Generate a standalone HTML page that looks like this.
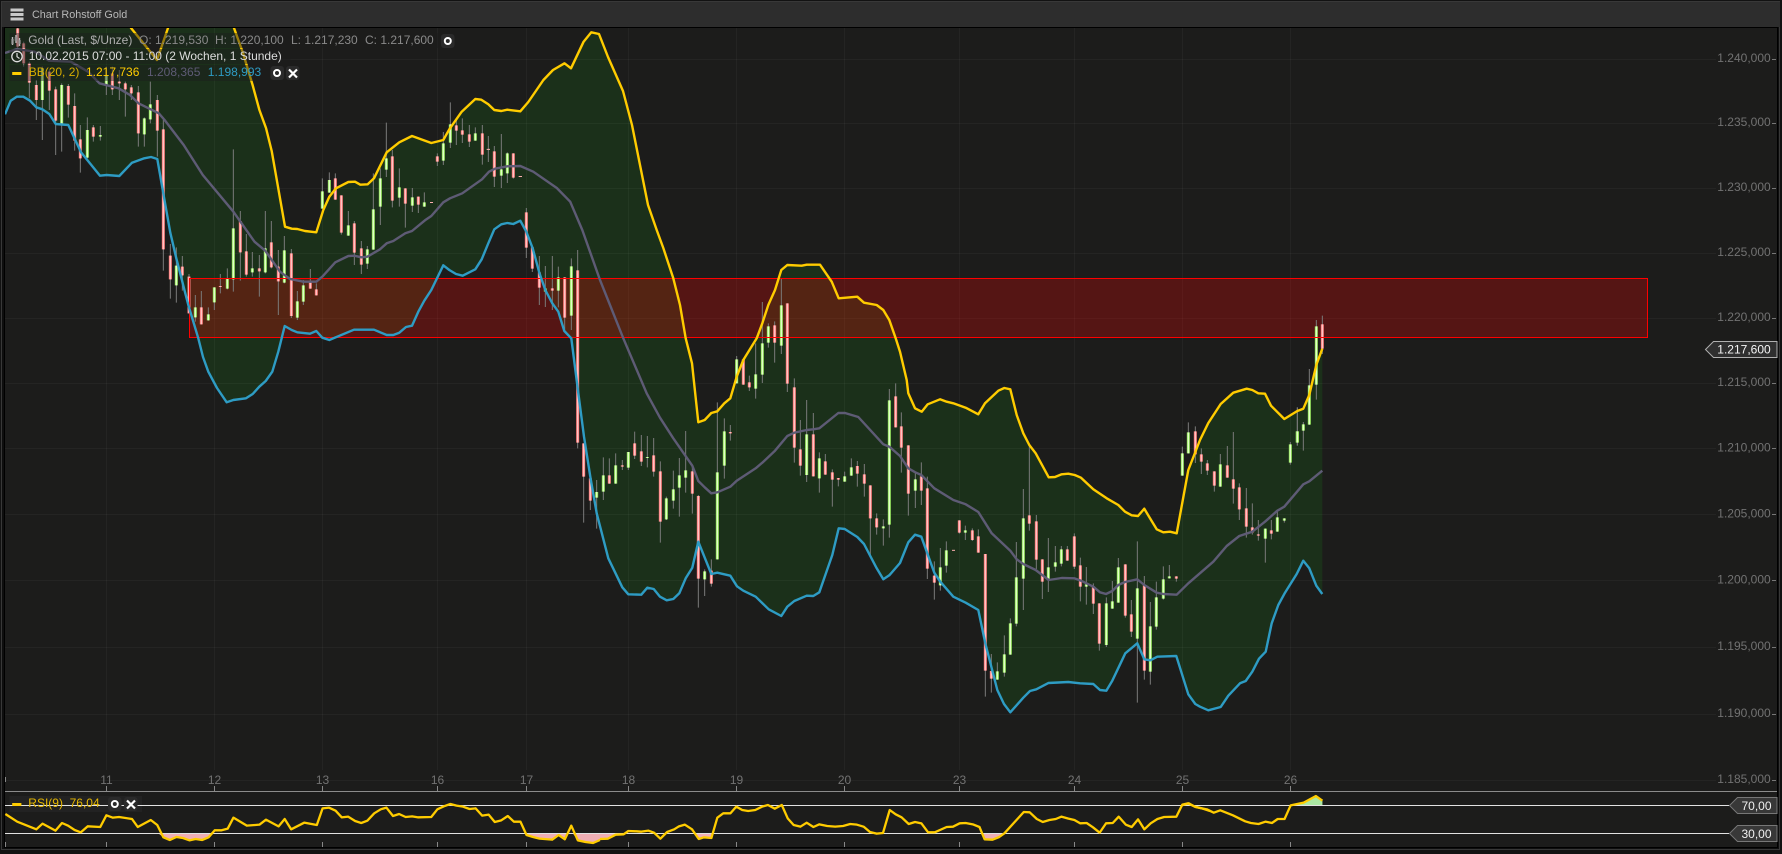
<!DOCTYPE html>
<html lang="de"><head><meta charset="utf-8"><title>Chart Rohstoff Gold</title>
<style>
html,body{margin:0;padding:0;background:#121212;width:1782px;height:854px;overflow:hidden}
svg{display:block;font-family:"Liberation Sans",Arial,sans-serif;font-size:12px}
.w{stroke:#7a7a7a;stroke-width:3;fill:none}
.ge{stroke:#9bea63;stroke-width:9;fill:none}
.gc{stroke:#e8ffd2;stroke-width:3.5;fill:none}
.re{stroke:#ff7f7f;stroke-width:9;fill:none}
.rc{stroke:#ffcaca;stroke-width:3.5;fill:none}
.ax{fill:#727272}
.bt{fill:#2a2a2a}
.ring{fill:none;stroke:#fff;stroke-width:2}
.x{stroke:#fff;stroke-width:2.2;fill:none}
.rsi{fill:none;stroke:#ffcc00;stroke-width:2.3;vector-effect:non-scaling-stroke;stroke-linejoin:round}
.tk{stroke:#888;stroke-width:1}
</style></head><body>
<svg width="1782" height="854" viewBox="0 0 1782 854" xmlns="http://www.w3.org/2000/svg">
<defs><clipPath id="cp"><rect x="5" y="28" width="1772" height="763"/></clipPath></defs>
<rect width="1782" height="854" fill="#121212"/>
<rect x="1.5" y="1.5" width="1778" height="848" fill="#0e0e0e" stroke="#383838"/>
<rect x="2" y="2" width="1778" height="25" fill="#2d2d2d"/>
<rect x="4.5" y="27.5" width="1773" height="820" fill="#1c1c1b" stroke="#000"/>
<g fill="#c9c9c9"><rect x="10.5" y="8.5" width="13" height="3"/><rect x="10.5" y="13" width="13" height="3"/><rect x="10.5" y="17.5" width="13" height="3"/></g>
<text x="32" y="18" font-size="10.8" fill="#b8b8b8">Chart Rohstoff Gold</text>

<g clip-path="url(#cp)">
<path fill="#1b301a" d="M5,-40 100,-40 131,28 157,60 168,28 190,-40 215,-40 234,28 243,53 252.6,85 259.4,110 266,128 271.7,151 285,226.7 291.7,228.7 297.3,229 305,231 316.3,232.3 323.3,210 329.3,196.7 336,188.3 348.3,182 355,181.7 360.3,184.7 367.7,184.3 374,178.3 386.7,152.3 399.3,142.3 412,136 431.3,143 443.3,140 449.3,129.3 461.7,111.7 475.3,99 481.3,99.7 488.3,104.3 494.3,110 501.3,111 507.3,109.7 520.3,111.3 528.3,102 543.4,80 553,70 564.5,63.3 571,68.3 583.6,41.7 591.3,32.3 599,34 608,57 623,91 632,125 640,165 648,205 656.7,230 663.3,248 673.3,278.3 680,305 685.7,338.3 692,363.3 698.3,422.3 704.7,420 711.3,413 717.3,411.3 724.3,403.3 730.3,398.3 736.7,376.7 743.3,360 756.7,338.3 762.3,323.3 768.3,305 775,290 781.3,270 787.3,265 801.7,265.7 806.7,264.7 820,264.7 831.7,281.7 838.7,298.3 857.3,296.7 864,302.7 876.7,305 883.3,310 889.3,320 895.7,338.3 900,351.7 906.7,380 908.3,393.3 915,408.3 921.7,411.7 927.7,404.3 940,399.3 946.7,401.7 953.3,403.3 965.7,407.7 978.3,414.3 985,403.3 998.3,390.7 1004.3,388 1010.3,389.3 1016.7,415 1023.3,433.3 1029.3,445 1035.7,453.3 1048.7,477.3 1055,477 1061.7,474.3 1068.3,473.7 1074.7,475 1081,477.7 1093.3,489.3 1106.7,498.3 1118.3,505 1125,511.7 1131.7,515.3 1138,516 1144.3,508.7 1150,518.3 1156.7,529.3 1163.3,532.3 1170,531.7 1176.7,533.3 1188.3,470 1200,440 1208.3,423 1220.7,404 1233.3,392.7 1246.7,388.7 1252.3,390 1258.3,393.3 1265,393.7 1271,405.7 1284.3,419 1297.3,411 1303.3,408.7 1309.3,395 1316.3,365 1322.3,348.7 1322.3,594 1316.3,585.7 1309.3,568.3 1303.3,560.7 1296.7,574 1285,592.7 1278.3,605 1271.7,623.3 1265.7,651.7 1259,658.7 1252.3,671.7 1245.7,681 1240,683.3 1228.3,695.7 1220.7,707 1208.3,710.3 1200,706.7 1195.3,704 1188.3,694.3 1176.3,656 1157.3,656.7 1150.3,660.3 1144.3,659.3 1137.3,643.3 1125.3,653.3 1112.3,680.7 1106.3,690.7 1100,690 1093.3,684 1080,683.3 1068.3,682 1048.3,683 1036.3,689.3 1030,691 1023.3,697.7 1010.3,712.3 1004,704 997.3,690 985.3,643.3 978.3,610 965.7,602.7 953.3,596.7 940.3,581.7 934.3,572.7 921.3,536.7 915,534.7 908.3,542.3 900,563 889.3,575.3 883.3,579.3 876.7,568.3 864,544 857.3,537 844.7,529 838.7,528.3 832.3,555 819.3,592.3 813.3,596 806.7,595.7 794.3,601 787.3,606.7 781.3,616 768.7,609.3 755.7,596.7 743.3,590.7 737,586.3 730.3,575.7 717.3,572.7 711.3,574 698.3,541.7 692.3,567.7 685.7,578.3 679.3,593.3 673.3,599 666.7,600.3 660,596.7 653.7,589 647.3,587.7 641.3,594.7 628.3,594.3 622.3,587.3 608.3,558.3 596.7,513.3 590.3,476.7 584,436.7 577.7,388.3 571.3,338.3 564.3,331 558.3,311.7 552.3,303.3 545.3,290 539.3,272.7 532.7,248.3 526.3,231.7 520.3,220.7 513.3,224 507.3,223 501.3,224.3 494.3,229.3 488.3,243.3 481.7,259.3 475.3,269.3 462.7,275.7 456,274 449.3,270 443.3,265.3 431.3,290 424.3,300.7 418.3,311.7 412,325.7 406,327 399.3,332.7 393.3,335 386.7,335 374,329.7 354,329.7 329.3,340 322.3,337.7 316.3,331 310,333.7 297.3,332.3 291.7,330 284.7,326 278.3,351.7 272.3,371.7 265.7,381 259.3,386.7 252.7,394 246,398.3 233.3,400 226.7,402.3 217,388 208.3,371.7 203,357 198.3,338.3 188.3,305 176.3,258.3 170.3,232.7 163.3,193.3 157.3,159 151,157 144.3,158.3 132,162.7 119.3,176 106.7,175 100,175.7 81,152.3 68.3,125 55.7,124 49.3,114 42.3,109.3 36.3,107.3 30,100.7 23.3,96.7 16.7,96.7 10.7,100.7 5,114.3Z"/>
<g stroke="#fff" stroke-opacity=".04" stroke-width="1" fill="none">
<path d="M5,59.5H1716M5,123.5H1716M5,188.5H1716M5,253.5H1716M5,318.5H1716M5,383.5H1716M5,448.5H1716M5,514.5H1716M5,580.5H1716M5,647.5H1716M5,714.5H1716M5,780.5H1716"/>
<path d="M106.5,28V770M214.5,28V770M322.5,28V770M437.5,28V770M526.5,28V770M628.5,28V770M736.5,28V770M844.5,28V770M959.5,28V770M1074.5,28V770M1182.5,28V770M1290.5,28V770"/>
</g>
<rect x="189.5" y="278.5" width="1458" height="59" fill="#ff0000" fill-opacity=".25"/>

<!-- candles -->
<g transform="translate(0,80) scale(.33333)">
<path class="w" d="M53,-160V-90M71,-115V-40M88,-55V55M109,0V120M127,-40V180M148,-30V90M167,20V225M185,10V215M205,12V113M224,40V212M241,135V278M262,112V235M280,135V185M301,138V182M319,-40V45M337,-40V45M358,-30V60M376,5V110M394,15V60M415,18V200M433,112V200M451,5V130M472,45V230M490,120V572M511,492V656M529,502V668M547,528V632M567,582V700M586,645V725M604,633V733M625,682V722M643,622V690M661,582V640M682,565V628M700,208V635M721,393V602M739,462V590M757,516V590M778,525V650M796,393V580M814,423V565M835,510V705"/>
<path class="ge" d="M127,-35V60M185,15V135M262,150V233M301,165V170M319,-15V18M433,115V163M451,73V118M529,557V616M586,682V712M625,703V721M643,622V667M682,597V626M700,445V598M757,565V577M796,505V577"/>
<path class="gc" d="M127,-35V60M185,15V135M262,150V233M301,165V170M319,-15V18M433,115V163M451,73V118M529,557V616M586,682V712M625,703V721M643,622V667M682,597V626M700,445V598M757,565V577M796,505V577"/>
<path class="re" d="M53,-155V-100M71,-110V-50M88,-50V8M109,15V60M148,-25V32M167,28V122M205,18V74M224,78V182M241,178V235M280,142V170M337,-20V28M358,5V10M376,10V28M394,22V40M415,37V160M472,60V152M490,148V508M511,527V598M547,560V586M567,590V700M604,682V733M661,618V621M721,423V517M739,514V584M778,565V574M814,487V562M835,560V604"/>
<path class="rc" d="M53,-155V-100M71,-110V-50M88,-50V8M109,15V60M148,-25V32M167,28V122M205,18V74M224,78V182M241,178V235M280,142V170M337,-20V28M358,5V10M376,10V28M394,22V40M415,37V160M472,60V152M490,148V508M511,527V598M547,560V586M567,590V700M604,682V733M661,618V621M721,423V517M739,514V584M778,565V574M814,487V562M835,560V604"/>
</g>
<g transform="translate(280,90) scale(.33333)">
<path class="w" d="M13,438V580M34,477V684M52,603V690M70,570V645M91,537V596M109,580V616M127,265V356M148,247V308M166,250V329M184,316V434M205,363V437M223,393V525M244,453V552M262,468V537M280,250V479M301,235V405M319,98V261M337,180V352M358,235V350M376,295V413M397,294V366M415,320V369M433,307V350M472,190V228M490,126V225M511,37V174M529,85V165M547,85V159M568,105V171M586,112V152M607,105V224M625,138V216M643,168V291M664,132V294M682,187V279M700,190V266M739,354V504M757,468V546M778,498V645M796,528V651M817,498V660M835,530V652"/>
<path class="ge" d="M13,481V578M52,634V683M70,586V635M127,304V356M148,270V308M205,406V437M262,478V521M280,358V479M301,265V350M319,205V239M358,292V323M397,322V347M433,337V350M490,160V212M511,103V158M586,130V152M664,238V257M682,190V250M796,595V605M835,562V602"/>
<path class="gc" d="M13,481V578M52,634V683M70,586V635M127,304V356M148,270V308M205,406V437M262,478V521M280,358V479M301,265V350M319,205V239M358,292V323M397,322V347M433,337V350M490,160V212M511,103V158M586,130V152M664,238V257M682,190V250M796,595V605M835,562V602"/>
<path class="re" d="M34,490V678M91,575V596M109,598V616M166,265V329M184,316V428M223,400V488M244,475V524M337,199V332M376,295V341M415,320V344M472,199V215M529,106V122M547,121V134M568,133V155M607,130V194M643,184V260M700,190V263M739,367V473M757,472V536M778,547V593M817,595V602"/>
<path class="rc" d="M34,490V678M91,575V596M109,598V616M166,265V329M184,316V428M223,400V488M244,475V524M337,199V332M376,295V341M415,320V344M472,199V215M529,106V122M547,121V134M568,133V155M607,130V194M643,184V260M700,190V263M739,367V473M757,472V536M778,547V593M817,595V602"/>
<path d="M450,337.5H459M620,178H630M716,259.5H726" stroke="#ffb0b0" stroke-width="3" fill="none"/>
</g>
<g transform="translate(500,230) scale(.33333)">
<path class="w" d="M194,142V299M214,85V300M233,60V655M251,640V878M271,745V840M290,750V896M310,682V810M328,685V761M347,670V761M367,690V720M385,666V720M404,605V687M424,615V708M442,618V712M461,624V740M481,694V938M499,800V870M520,722V836M538,684V860M557,603V788M577,710V851M595,795V1133M614,1018V1098M634,988V1070M652,517V988M673,565V746M691,585V632M710,378V460M730,385V464M748,437V483M767,340V506M787,216V459M805,280V353M824,274V398M844,145V372M862,220V486M883,445V698M901,570V737M920,510V756M940,549V739M958,667V788M976,672V734M997,718V830M1015,744V769M1034,725V755M1054,685V737M1072,693V770M1093,702V800M1111,766V980M1130,850V914M1150,868V947M1168,477V923M1187,460V592"/>
<path class="ge" d="M214,109V257M290,786V803M310,736V785M347,706V761M385,666V713M442,681V684M499,805V868M520,778V812M538,736V773M557,721V743M614,1024V1048M652,727V988M673,604V707M710,388V460M767,433V476M787,340V434M805,289V338M844,226V347M920,613V735M958,685V745M1034,739V755M1054,712V737M1150,889V895M1168,511V884"/>
<path class="gc" d="M214,109V257M290,786V803M310,736V785M347,706V761M385,666V713M442,681V684M499,805V868M520,778V812M538,736V773M557,721V743M614,1024V1048M652,727V988M673,604V707M710,388V460M767,433V476M787,340V434M805,289V338M844,226V347M920,613V735M958,685V745M1034,739V755M1054,712V737M1150,889V895M1168,511V884"/>
<path class="re" d="M194,142V263M233,121V638M251,640V740M271,745V812M328,736V761M367,706V710M404,640V677M424,664V695M461,676V725M481,724V875M577,724V791M595,798V1046M634,1022V1061M691,606V610M730,388V464M748,457V472M824,286V338M862,220V461M883,472V653M901,658V707M940,613V739M976,694V734M997,727V749M1015,744V749M1072,708V731M1093,733V761M1111,766V865M1130,865V892M1187,499V592"/>
<path class="rc" d="M194,142V263M233,121V638M251,640V740M271,745V812M328,736V761M367,706V710M404,640V677M424,664V695M461,676V725M481,724V875M577,724V791M595,798V1046M634,1022V1061M691,606V610M730,388V464M748,457V472M824,286V338M862,220V461M883,472V653M901,658V707M940,613V739M976,694V734M997,727V749M1015,744V749M1072,708V731M1093,733V761M1111,766V865M1130,865V892M1187,499V592"/>
</g>
<g transform="translate(900,380) scale(.33333)">
<path class="w" d="M4,97V278M25,196V407M46,280V384M64,247V375M82,290V597M103,544V659M121,504V632M139,484V578M178,421V461M196,437V480M217,445V483M235,448V518M256,522V950M274,822V938M292,847V899M313,766V890M331,715V824M349,486V739M370,327V690M388,197V452M409,405V567M427,538V657M445,474V636M466,498V575M484,498V559M502,498V542M523,460V567M541,533V664M559,561V674M580,610V702M598,670V812M619,652V801M637,603V686M655,534V668M676,553V713M694,660V771M712,484V968M733,588V899M751,666V914M769,605V749M790,559V659M808,555V595M829,589V605M847,200V287M865,127V220M886,139V249M904,205V282M922,240V285M943,274V335M961,222V320M982,198V293M1000,156V371M1018,310V420M1039,324V473M1057,370V464M1075,420V482M1096,446V548M1114,420V478M1132,393V455M1153,415V428M1171,186V254M1192,82V197"/>
<path class="ge" d="M46,298V332M121,562V616M139,511V557M196,451V458M292,874V899M313,823V878M331,730V824M349,592V731M370,415V596M445,562V598M466,547V560M484,508V551M559,613V620M619,670V795M637,664V686M655,562V668M712,625V776M751,739V875M769,652V740M790,598V656M808,589V595M847,220V287M865,157V220M961,253V320M1096,446V476M1132,412V455M1153,415V422M1171,193V248M1192,154V187"/>
<path class="gc" d="M46,298V332M121,562V616M139,511V557M196,451V458M292,874V899M313,823V878M331,730V824M349,592V731M370,415V596M445,562V598M466,547V560M484,508V551M559,613V620M619,670V795M637,664V686M655,562V668M712,625V776M751,739V875M769,652V740M790,598V656M808,589V595M847,220V287M865,157V220M961,253V320M1096,446V476M1132,412V455M1153,415V422M1171,193V248M1192,154V187"/>
<path class="re" d="M4,139V203M25,196V341M64,289V332M82,325V566M103,587V608M178,421V458M217,451V480M235,469V518M256,522V872M274,873V896M388,406V431M409,424V539M427,538V605M502,508V542M523,469V560M541,556V620M580,619V671M598,670V791M676,553V707M694,703V755M733,614V872M829,589V596M886,154V223M904,223V245M922,250V272M943,274V317M982,256V293M1000,298V326M1018,322V388M1039,385V440M1057,442V458M1075,463V467M1114,451V461"/>
<path class="rc" d="M4,139V203M25,196V341M64,289V332M82,325V566M103,587V608M178,421V458M217,451V480M235,469V518M256,522V872M274,873V896M388,406V431M409,424V539M427,538V605M502,508V542M523,469V560M541,556V620M580,619V671M598,670V791M676,553V707M694,703V755M733,614V872M829,589V596M886,154V223M904,223V245M922,250V272M943,274V317M982,256V293M1000,298V326M1018,322V388M1039,385V440M1057,442V458M1075,463V467M1114,451V461"/>
<path d="M156,511H165" stroke="#ffb0b0" stroke-width="3" fill="none"/>
</g>
<g transform="translate(1200,300) scale(.33333)">
<path class="w" d="M292,322V437M310,366V452M328,207V374M349,60V299M367,47V162"/>
<path class="ge" d="M292,394V428M310,373V392M328,256V374M349,79V254"/>
<path class="gc" d="M292,394V428M310,373V392M328,256V374M349,79V254"/>
<path class="re" d="M367,73V146"/>
<path class="rc" d="M367,73V146"/>
</g>

<rect x="189.5" y="278.5" width="1458" height="59" fill="none" stroke="#f00" stroke-width="1"/>

<!-- Bollinger lines -->
<polyline fill="none" stroke="#5e5b75" stroke-width="2.4" stroke-linejoin="round" points="5,53 17,49 34.4,51.7 42,56 49,60.7 70.8,61.7 88,71.7 99.5,83.3 118.6,88.3 130,95 138.5,103.3 158.8,113.3 164.6,120 183.7,145 202.8,175 233.4,211.7 254.5,241.7 265.2,250.7 280,271.7 290,279 303.3,281.7 316.3,281.7 322.3,276.7 335.3,262.3 348.3,256 354.3,255.7 361.3,257.3 367.3,256.7 380,249.3 386.7,243.3 393.3,241 405.3,233.3 412,231 425,220.3 431.3,216 443.3,202.3 450,198.3 462.3,193.3 482,179.3 489,171.7 495,168.7 507.3,166.3 520.3,166 533.3,171.7 556.8,188 570.2,201.7 582.3,230 600,280 623.3,338.3 646.7,393.3 660,417.7 673.3,438.3 692.3,465.7 698.3,481 704.7,487.3 711.3,493.3 717.3,492.3 730.3,486.7 736.7,480.7 755.7,468.3 762.3,462.7 775,450.7 787.3,436 794.3,432.7 806.7,430 813.3,429.3 819.3,428.3 838.3,413 845,413 858.3,417 883.3,444.3 889.3,446.7 900,456 908.3,468.3 915.3,472.3 921.3,475 934.3,488.3 953.3,500 965.7,504.3 978.3,512 991.7,533.3 1010.3,550.7 1016.7,559.3 1023.3,564 1035.7,570 1048.7,580 1061.7,578 1074.3,578.3 1081,580.7 1093.3,586.7 1100,592.3 1106,594 1112.3,591 1118.3,585 1125,582 1137.3,579.3 1144.3,585 1156.7,592.7 1163.3,594 1176.7,594.7 1188.3,583.3 1213.3,561.7 1226.7,546 1239.3,536 1252.3,531.7 1265,521.7 1277.3,510.7 1284.3,506.7 1303.3,484.3 1309.3,481.3 1322.3,470.7"/>
<polyline fill="none" stroke="#ffcc00" stroke-width="2.4" stroke-linejoin="round" points="100,-40 131,28 157,60 168,28 190,-40 215,-40 234,28 243,53 252.6,85 259.4,110 266,128 271.7,151 285,226.7 291.7,228.7 297.3,229 305,231 316.3,232.3 323.3,210 329.3,196.7 336,188.3 348.3,182 355,181.7 360.3,184.7 367.7,184.3 374,178.3 386.7,152.3 399.3,142.3 412,136 431.3,143 443.3,140 449.3,129.3 461.7,111.7 475.3,99 481.3,99.7 488.3,104.3 494.3,110 501.3,111 507.3,109.7 520.3,111.3 528.3,102 543.4,80 553,70 564.5,63.3 571,68.3 583.6,41.7 591.3,32.3 599,34 608,57 623,91 632,125 640,165 648,205 656.7,230 663.3,248 673.3,278.3 680,305 685.7,338.3 692,363.3 698.3,422.3 704.7,420 711.3,413 717.3,411.3 724.3,403.3 730.3,398.3 736.7,376.7 743.3,360 756.7,338.3 762.3,323.3 768.3,305 775,290 781.3,270 787.3,265 801.7,265.7 806.7,264.7 820,264.7 831.7,281.7 838.7,298.3 857.3,296.7 864,302.7 876.7,305 883.3,310 889.3,320 895.7,338.3 900,351.7 906.7,380 908.3,393.3 915,408.3 921.7,411.7 927.7,404.3 940,399.3 946.7,401.7 953.3,403.3 965.7,407.7 978.3,414.3 985,403.3 998.3,390.7 1004.3,388 1010.3,389.3 1016.7,415 1023.3,433.3 1029.3,445 1035.7,453.3 1048.7,477.3 1055,477 1061.7,474.3 1068.3,473.7 1074.7,475 1081,477.7 1093.3,489.3 1106.7,498.3 1118.3,505 1125,511.7 1131.7,515.3 1138,516 1144.3,508.7 1150,518.3 1156.7,529.3 1163.3,532.3 1170,531.7 1176.7,533.3 1188.3,470 1200,440 1208.3,423 1220.7,404 1233.3,392.7 1246.7,388.7 1252.3,390 1258.3,393.3 1265,393.7 1271,405.7 1284.3,419 1297.3,411 1303.3,408.7 1309.3,395 1316.3,365 1322.3,348.7"/>
<polyline fill="none" stroke="#2e9cc4" stroke-width="2.4" stroke-linejoin="round" points="5,114.3 10.7,100.7 16.7,96.7 23.3,96.7 30,100.7 36.3,107.3 42.3,109.3 49.3,114 55.7,124 68.3,125 81,152.3 100,175.7 106.7,175 119.3,176 132,162.7 144.3,158.3 151,157 157.3,159 163.3,193.3 170.3,232.7 176.3,258.3 188.3,305 198.3,338.3 203,357 208.3,371.7 217,388 226.7,402.3 233.3,400 246,398.3 252.7,394 259.3,386.7 265.7,381 272.3,371.7 278.3,351.7 284.7,326 291.7,330 297.3,332.3 310,333.7 316.3,331 322.3,337.7 329.3,340 354,329.7 374,329.7 386.7,335 393.3,335 399.3,332.7 406,327 412,325.7 418.3,311.7 424.3,300.7 431.3,290 443.3,265.3 449.3,270 456,274 462.7,275.7 475.3,269.3 481.7,259.3 488.3,243.3 494.3,229.3 501.3,224.3 507.3,223 513.3,224 520.3,220.7 526.3,231.7 532.7,248.3 539.3,272.7 545.3,290 552.3,303.3 558.3,311.7 564.3,331 571.3,338.3 577.7,388.3 584,436.7 590.3,476.7 596.7,513.3 608.3,558.3 622.3,587.3 628.3,594.3 641.3,594.7 647.3,587.7 653.7,589 660,596.7 666.7,600.3 673.3,599 679.3,593.3 685.7,578.3 692.3,567.7 698.3,541.7 711.3,574 717.3,572.7 730.3,575.7 737,586.3 743.3,590.7 755.7,596.7 768.7,609.3 781.3,616 787.3,606.7 794.3,601 806.7,595.7 813.3,596 819.3,592.3 832.3,555 838.7,528.3 844.7,529 857.3,537 864,544 876.7,568.3 883.3,579.3 889.3,575.3 900,563 908.3,542.3 915,534.7 921.3,536.7 934.3,572.7 940.3,581.7 953.3,596.7 965.7,602.7 978.3,610 985.3,643.3 997.3,690 1004,704 1010.3,712.3 1023.3,697.7 1030,691 1036.3,689.3 1048.3,683 1068.3,682 1080,683.3 1093.3,684 1100,690 1106.3,690.7 1112.3,680.7 1125.3,653.3 1137.3,643.3 1144.3,659.3 1150.3,660.3 1157.3,656.7 1176.3,656 1188.3,694.3 1195.3,704 1200,706.7 1208.3,710.3 1220.7,707 1228.3,695.7 1240,683.3 1245.7,681 1252.3,671.7 1259,658.7 1265.7,651.7 1271.7,623.3 1278.3,605 1285,592.7 1296.7,574 1303.3,560.7 1309.3,568.3 1316.3,585.7 1322.3,594"/>
</g>

<!-- legend -->
<rect x="9.5" y="33" width="445.5" height="15" fill="#1c1c1c" fill-opacity=".45"/>
<rect x="9.5" y="49" width="281" height="15" fill="#1c1c1c" fill-opacity=".45"/>
<rect x="9.5" y="65" width="294" height="16" fill="#1c1c1c" fill-opacity=".45"/>
<path d="M12.5,37V45M16,35V43M19.5,38V46" stroke="#bbb" stroke-width="1.4" fill="none"/>
<path d="M11,39H14V44H11ZM14.5,37H17.5V41H14.5ZM18,40H21V44H18Z" fill="#888" fill-opacity=".6"/>
<text x="28.3" y="44" fill="#aeaeae">Gold (Last, $/Unze)</text>
<text x="139" y="44" fill="#8a8a8a">O: 1.219,530</text>
<text x="215" y="44" fill="#8a8a8a">H: 1.220,100</text>
<text x="291" y="44" fill="#8a8a8a">L: 1.217,230</text>
<text x="365" y="44" fill="#8a8a8a">C: 1.217,600</text>
<rect class="bt" x="441" y="34" width="13.5" height="14" rx="3"/>
<circle class="ring" cx="447.8" cy="41" r="3"/>
<circle cx="17" cy="56.5" r="5.2" fill="none" stroke="#ddd" stroke-width="1.3"/>
<path d="M17,53V56.7L19.5,58.5" fill="none" stroke="#ddd" stroke-width="1.2"/>
<text x="28.7" y="60" fill="#dcdcdc">10.02.2015 07:00 - 11:00 (2 Wochen, 1 Stunde)</text>
<rect x="12.2" y="72" width="9.2" height="3" fill="#ffcc00"/>
<text x="28.7" y="76" fill="#d8ad00">BB(20, 2)</text>
<text x="86" y="76" fill="#ffcc00">1.217,736</text>
<text x="147" y="76" fill="#5e5b75">1.208,365</text>
<text x="207.8" y="76" fill="#2e9cc4">1.198,993</text>
<rect class="bt" x="270.5" y="66" width="13.5" height="14" rx="3"/>
<rect class="bt" x="286" y="66" width="13.5" height="14" rx="3"/>
<circle class="ring" cx="277" cy="73" r="3"/>
<path class="x" d="M289,69.5L297,77.5M297,69.5L289,77.5"/>

<!-- price axis -->
<g class="ax" text-anchor="end">
<text x="1770.7" y="62">1.240,000</text><text x="1770.7" y="126">1.235,000</text><text x="1770.7" y="191">1.230,000</text><text x="1770.7" y="256">1.225,000</text><text x="1770.7" y="321">1.220,000</text><text x="1770.7" y="386">1.215,000</text><text x="1770.7" y="451.4">1.210,000</text><text x="1770.7" y="517.4">1.205,000</text><text x="1770.7" y="583.4">1.200,000</text><text x="1770.7" y="650">1.195,000</text><text x="1770.7" y="717">1.190,000</text><text x="1770.7" y="783">1.185,000</text>
</g>
<path d="M1772,59.5H1776M1772,123.5H1776M1772,188.5H1776M1772,253.5H1776M1772,318.5H1776M1772,383.5H1776M1772,448.5H1776M1772,514.5H1776M1772,580.5H1776M1772,647.5H1776M1772,714.5H1776M1772,780.5H1776" stroke="#777" fill="none"/>
<path d="M1777,341.5H1713.5L1705.5,349.5L1713.5,357.5H1777Z" fill="#2f2f2f" stroke="#b0b0b0"/>
<text x="1717.3" y="353.5" fill="#f4f4f4">1.217,600</text>

<!-- time axis -->
<g class="ax" text-anchor="middle">
<text x="106.5" y="784">11</text><text x="214.5" y="784">12</text><text x="322.5" y="784">13</text><text x="437.5" y="784">16</text><text x="526.5" y="784">17</text><text x="628.5" y="784">18</text><text x="736.5" y="784">19</text><text x="844.5" y="784">20</text><text x="959.5" y="784">23</text><text x="1074.5" y="784">24</text><text x="1182.5" y="784">25</text><text x="1290.5" y="784">26</text>
</g>
<path class="tk" d="M5.5,777V782M106.5,786V791M214.5,786V791M322.5,786V791M437.5,786V791M526.5,786V791M628.5,786V791M736.5,786V791M844.5,786V791M959.5,786V791M1074.5,786V791M1182.5,786V791M1290.5,786V791M5.5,842V847M106.5,842V847M214.5,842V847M322.5,842V847M437.5,842V847M526.5,842V847M628.5,842V847M736.5,842V847M844.5,842V847M959.5,842V847M1074.5,842V847M1182.5,842V847M1290.5,842V847" fill="none"/>
<rect x="5" y="791" width="1772" height="1" fill="#8c8c8c"/>

<!-- RSI -->
<rect x="9.5" y="796" width="132.5" height="16" fill="#232323" fill-opacity=".9"/>
<g transform="translate(0,740) scale(.38265,.33333)" fill="#efaeb4"><path d="M414,280 427,292 444,300 461,291 478,294 495,301 511,297 528,300 545,292 556,280Z"/><path d="M1372,280 1376,285 1393,291 1410,296 1443,299 1460,285 1476,298 1485,280Z"/><path d="M1497,280 1510,301 1530,306 1550,309 1568,300 1568,280Z"/></g>
<g transform="translate(590,790) scale(.39541,.33333)" fill="#efaeb4"><path d="M0,130 0,157 25,147 45,146 65,134 72,130Z"/><path d="M266,130 275,147 288,142 307,144 310,130Z"/><path d="M988,130 998,148 1018,149 1035,141 1048,130Z"/></g>
<g transform="translate(1182,740) scale(.38265,.33333)"><path fill="#abe8a3" d="M284,196 318,188 350,168 367,182 367,196Z"/></g>
<rect x="5" y="805" width="1724" height="1" fill="#e2e2e2"/>
<rect x="5" y="833" width="1724" height="1" fill="#e2e2e2"/>
<g transform="translate(0,740) scale(.38265,.33333)"><polyline class="rsi" points="14,222 45,245 95,268 111,251 145,272 162,249 178,257 195,270 211,277 229,259 262,261 278,226 295,233 311,231 345,237 360,261 394,240 411,255 427,292 444,300 461,291 478,294 495,301 511,297 528,300 545,292 561,271 578,271 595,266 610,233 645,257 678,254 695,239 728,259 744,237 761,268 795,248 828,255 843,205 860,203 877,212 893,232 910,230 928,243 944,249 960,242 978,220 995,208 1010,203 1027,228 1043,222 1060,231 1077,229 1093,232 1127,231 1143,208 1160,199 1177,192 1193,197 1210,200 1227,207 1243,205 1260,227 1277,224 1293,246 1310,241 1327,228 1343,245 1360,245 1376,285 1393,291 1410,296 1443,299 1460,285 1476,298 1493,257 1510,301 1530,306 1550,309 1568,300"/></g>
<g transform="translate(590,790) scale(.39541,.33333)"><polyline class="rsi" points="25,147 45,146 65,134 85,133 97,123 118,124 130,125 148,122 162,128 178,146 195,126 213,118 225,109 240,104 258,118 275,147 288,142 307,144 322,83 337,70 355,70 370,50 385,60 400,63 418,60 435,50 450,45 467,56 485,45 500,85 515,105 532,110 548,98 565,111 580,103 600,108 620,110 640,108 658,102 675,104 692,110 708,126 725,131 741,129 758,60 773,73 788,82 806,102 822,96 838,100 855,127 872,127 902,111 918,110 935,100 950,99 968,103 985,111 998,148 1018,149 1035,141 1048,130 1097,66 1112,67 1130,87 1145,96 1162,90 1178,87 1192,80 1210,86 1225,90 1240,100 1256,99 1272,112 1289,128 1305,100 1322,99 1337,80 1355,104 1370,111 1386,88 1402,118 1418,100 1435,87 1452,81 1483,80 1498,44 1512,40 1530,50 1547,55 1568,63"/></g>
<g transform="translate(1182,740) scale(.38265,.33333)"><polyline class="rsi" points="0,196 18,190 35,201 65,208 83,218 100,211 133,226 165,244 180,249 200,252 218,245 235,249 250,237 268,237 284,196 318,188 350,168 367,182"/></g>
<path d="M1777,797.5H1737.5L1729.5,805.5L1737.5,813.5H1777Z" fill="#383838" stroke="#777"/>
<path d="M1777,825.5H1737.5L1729.5,833.5L1737.5,841.5H1777Z" fill="#383838" stroke="#777"/>
<text x="1741.5" y="810" fill="#f0f0f0">70,00</text>
<text x="1741.5" y="838" fill="#f0f0f0">30,00</text>
<rect x="12.2" y="803" width="9.2" height="3" fill="#ffcc00"/>
<text x="28.3" y="807" fill="#e6b800">RSI(9)</text>
<text x="69.6" y="807" fill="#e6b800">76,04</text>
<rect class="bt" x="108" y="797" width="13.5" height="14" rx="3"/>
<rect class="bt" x="124" y="797" width="13.5" height="14" rx="3"/>
<circle class="ring" cx="114.8" cy="804" r="3"/>
<path class="x" d="M127,800.5L135,808.5M135,800.5L127,808.5"/>
</svg>
</body></html>
